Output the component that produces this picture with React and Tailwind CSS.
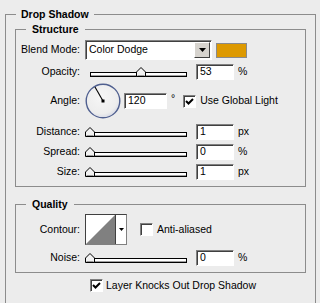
import React from 'react';

const sunken = 'border border-t-[#808080] border-l-[#808080] border-r-[#ffffff] border-b-[#ffffff] shadow-[inset_1px_1px_0_#404040]';

function NumField({ value, wide }) {
    return (
        <div className={`${sunken} bg-white h-[16px] ${wide ? 'w-[43px]' : 'w-[38px]'} pl-[3px] leading-[13px]`}>
            {value}
        </div>
    );
}

function Slider({ pct }) {
    return (
        <div className="relative w-[104px] h-[16px]">
            <div className="absolute left-[5px] w-[97px] top-[8px] h-[5px] border border-black bg-white shadow-[inset_0_-1px_0_#a0a0a0]" />
            <svg className="absolute top-[3px]" style={{ left: Math.round(pct * 97) }} width="10" height="10" viewBox="0 0 10 10">
                <path d="M0.5 9.5 V5 L5 0.5 L9.5 5 V9.5 Z" fill="#f2f2f2" stroke="#000" />
                <path d="M1.5 8.5 H8.5" stroke="#9a9a9a" />
            </svg>
        </div>
    );
}

function Check({ checked }) {
    return (
        <div className={`${sunken} bg-white w-[13px] h-[13px] shrink-0`}>
            {checked && (
                <svg width="11" height="11" viewBox="0 0 11 11">
                    <polyline points="2,5 4.5,7.5 9,3" fill="none" stroke="#000" strokeWidth="2" />
                </svg>
            )}
        </div>
    );
}

function Label({ children }) {
    return <div className="w-[64px] text-right shrink-0">{children}</div>;
}

function SliderRow({ label, pct, value, unit, className }) {
    return (
        <div className={`flex items-center h-[16px] ${className}`}>
            <Label>{label}</Label>
            <div className="ml-[5px]"><Slider pct={pct} /></div>
            <div className="ml-[7px]"><NumField value={value} /></div>
            <span className="ml-[4px]">{unit}</span>
        </div>
    );
}

export default function App() {
    return (
        <div className="w-[320px] h-[303px] overflow-hidden bg-[#ececec] pt-[8px] text-[10.5px] text-black font-['Liberation_Sans',Arial,sans-serif]">
            <fieldset className="ml-[5px] w-[311px] h-[320px] border border-[#8c8c8c]">
                <legend className="ml-[10px] px-[5px] font-bold leading-[13px]">Drop Shadow</legend>

                {/* Structure */}
                <fieldset className="mt-[2px] ml-[9px] w-[291px] border border-[#8c8c8c] pb-[6px]">
                    <legend className="ml-[10px] px-[6px] font-bold leading-[13px]">Structure</legend>

                    <div className="flex items-center h-[20px] mt-[4px]">
                        <Label>Blend Mode:</Label>
                        <div className={`ml-[5px] w-[127px] h-[20px] bg-white border border-t-[#808080] border-l-[#808080] border-r-[#ffffff] border-b-[#ffffff] shadow-[inset_1px_1px_0_#404040] flex items-center pl-[3px] pr-[1px]`}>
                            <span className="flex-1">Color Dodge</span>
                            <div className="w-[16px] h-[16px] bg-[#d6d3ce] border border-t-[#ffffff] border-l-[#ffffff] border-r-[#404040] border-b-[#404040] flex items-center justify-center">
                                <svg width="7" height="4" viewBox="0 0 7 4"><path d="M0 0 H7 L3.5 4 Z" fill="#000" /></svg>
                            </div>
                        </div>
                        <div className="ml-[4px] w-[31px] h-[15px] border border-[#8a8a8a] bg-[#dd9900]" />
                    </div>

                    <SliderRow label="Opacity:" pct={0.53} value="53" unit="%" className="mt-[4px]" />

                    <div className="flex items-center h-[36px] mt-[3px]">
                        <Label>Angle:</Label>
                        <svg className="ml-[5px]" width="36" height="36" viewBox="0 0 36 36">
                            <defs>
                                <radialGradient id="dial" cx="0.45" cy="0.4" r="0.6">
                                    <stop offset="0" stopColor="#f6f6f6" />
                                    <stop offset="0.8" stopColor="#ededed" />
                                    <stop offset="1" stopColor="#d8dbe6" />
                                </radialGradient>
                            </defs>
                            <circle cx="18" cy="18" r="16.8" fill="url(#dial)" stroke="#4f5f8f" strokeWidth="1.4" />
                            <line x1="18" y1="18" x2="10" y2="4" stroke="#000" strokeWidth="1.1" />
                            <rect x="16.5" y="16.5" width="3" height="3" fill="#000" />
                        </svg>
                        <div className="ml-[3px]"><NumField value="120" wide /></div>
                        <span className="ml-[4px] self-start mt-[8px]">°</span>
                        <div className="ml-[8px]"><Check checked /></div>
                        <span className="ml-[4px]">Use Global Light</span>
                    </div>

                    <SliderRow label="Distance:" pct={0} value="1" unit="px" className="mt-[5px]" />
                    <SliderRow label="Spread:" pct={0} value="0" unit="%" className="mt-[4px]" />
                    <SliderRow label="Size:" pct={0} value="1" unit="px" className="mt-[4px]" />
                </fieldset>

                {/* Quality */}
                <fieldset className="mt-[11px] ml-[9px] w-[291px] border border-[#8c8c8c] pb-[6px]">
                    <legend className="ml-[10px] px-[6px] font-bold leading-[13px]">Quality</legend>

                    <div className="flex items-center h-[31px] mt-[3px]">
                        <Label>Contour:</Label>
                        <div className="ml-[5px] w-[42px] h-[31px] flex border border-t-[#404040] border-l-[#404040] border-r-[#808080] border-b-[#808080] bg-white">
                            <svg width="29" height="29" viewBox="0 0 29 29">
                                <path d="M0 29 L29 0 V29 Z" fill="#808080" />
                            </svg>
                            <div className="w-[1px] bg-[#404040]" />
                            <div className="flex-1 flex items-center justify-center">
                                <svg width="5" height="3" viewBox="0 0 5 3"><path d="M0 0 H5 L2.5 3 Z" fill="#000" /></svg>
                            </div>
                        </div>
                        <div className="ml-[13px]"><Check /></div>
                        <span className="ml-[4px]">Anti-aliased</span>
                    </div>

                    <SliderRow label="Noise:" pct={0} value="0" unit="%" className="mt-[5px]" />
                </fieldset>

                <div className="flex items-center h-[13px] mt-[6px] ml-[84px]">
                    <Check checked />
                    <span className="ml-[3px]">Layer Knocks Out Drop Shadow</span>
                </div>
            </fieldset>
        </div>
    );
}
